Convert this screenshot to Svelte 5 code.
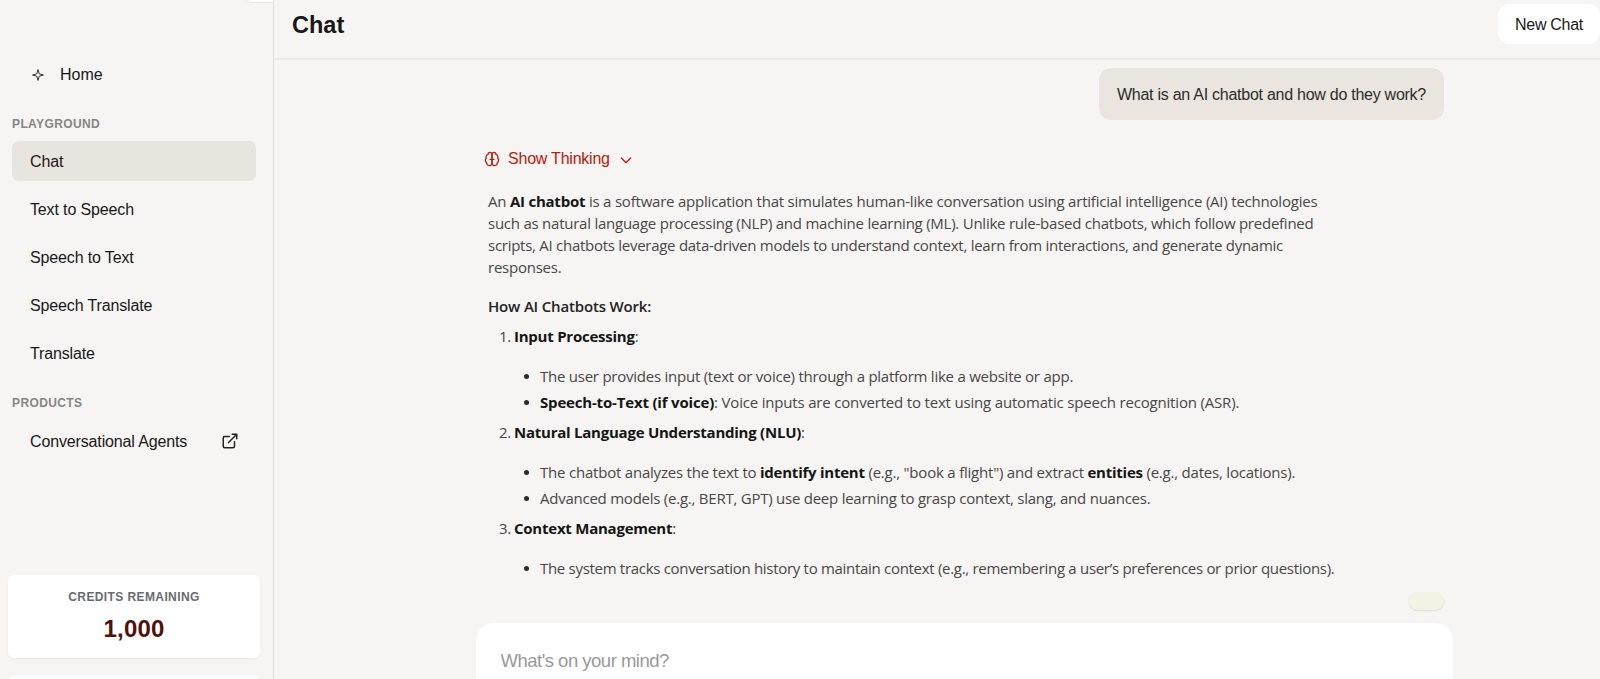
<script>
	let playground = ['Chat', 'Text to Speech', 'Speech to Text', 'Speech Translate', 'Translate'];
	let selected = 'Chat';
	let message = '';
</script>

<div class="page">
	<aside class="sidebar">
		<div class="toggle"></div>
		<div class="home">
			<svg width="12" height="12" viewBox="0 0 12 12" fill="none" stroke="#333" stroke-width="1" stroke-linejoin="round">
				<path d="M6 .6 7.200 4.800 11.400 6 7.200 7.200 6 11.400 4.800 7.200.6 6 4.800 4.800z" />
			</svg>
			<span>Home</span>
		</div>
		<h2>PLAYGROUND</h2>
		<nav>
			{#each playground as item}
				<button class="item" class:active={item === selected} on:click={() => (selected = item)}>
					<span>{item}</span>
				</button>
			{/each}
		</nav>
		<h2 class="products">PRODUCTS</h2>
		<button class="item agents">
			<span class="agents-label">Conversational Agents</span>
			<svg width="18" height="18" viewBox="0 0 24 24" fill="none" stroke="#222" stroke-width="2" stroke-linecap="round" stroke-linejoin="round">
				<path d="M15 3h6v6M10 14 21 3M18 13v6a2 2 0 0 1-2 2H5a2 2 0 0 1-2-2V8a2 2 0 0 1 2-2h6" />
			</svg>
		</button>
		<div class="bottom">
			<div class="credits">
				<div class="credits-label">CREDITS REMAINING</div>
				<div class="credits-value">1,000</div>
			</div>
			<div class="next-card"></div>
		</div>
	</aside>

	<main>
		<header>
			<h1>Chat</h1>
			<button class="new-chat">New Chat</button>
		</header>

		<section class="thread">
			<div class="question"><span>What is an AI chatbot and how do they work?</span></div>
			<div class="thinking">
				<svg width="16" height="16" viewBox="0 0 24 24" fill="none" stroke="currentColor" stroke-width="2" stroke-linecap="round" stroke-linejoin="round">
					<path d="M12 5a3 3 0 1 0-5.997.125 4 4 0 0 0-2.526 5.770 4 4 0 0 0 .556 6.588A4 4 0 1 0 12 18Z" />
					<path d="M12 5a3 3 0 1 1 5.997.125 4 4 0 0 1 2.526 5.770 4 4 0 0 1-.556 6.588A4 4 0 1 1 12 18Z" />
					<path d="M9 12.500h6" />
				</svg>
				<span>Show Thinking</span>
				<svg class="chevron" width="16" height="16" viewBox="0 0 24 24" fill="none" stroke="currentColor" stroke-width="2" stroke-linecap="round" stroke-linejoin="round">
					<path d="m5 9 7 7 7-7" />
				</svg>
			</div>

			<article class="answer">
				<p>
					<span class="lead">An <b>AI chatbot</b> is a software application that simulates human-like conversation using artificial intelligence (AI) technologies</span><br />
					such as natural language processing (NLP) and machine learning (ML). Unlike rule-based chatbots, which follow predefined<br />
					<span class="snug">scripts, AI chatbots leverage data-driven models to understand context, learn from interactions, and generate dynamic</span><br />
					responses.
				</p>
				<h3>How AI Chatbots Work:</h3>
				<div class="step"><span class="num">1.</span><span><b>Input Processing</b>:</span></div>
				<ul>
					<li>The user provides input (text or voice) through a platform like a website or app.</li>
					<li class="loose"><b>Speech-to-Text (if voice)</b>: Voice inputs are converted to text using automatic speech recognition (ASR).</li>
				</ul>
				<div class="step"><span class="num">2.</span><span><b>Natural Language Understanding (NLU)</b>:</span></div>
				<ul>
					<li class="lead">The chatbot analyzes the text to <b>identify intent</b> (e.g., "book a flight") and extract <b>entities</b> (e.g., dates, locations).</li>
					<li>Advanced models (e.g., BERT, GPT) use deep learning to grasp context, slang, and nuances.</li>
				</ul>
				<div class="step"><span class="num">3.</span><span><b>Context Management</b>:</span></div>
				<ul>
					<li class="tight">The system tracks conversation history to maintain context (e.g., remembering a user’s preferences or prior questions).</li>
				</ul>
			</article>
			<div class="pill"></div>
		</section>

		<div class="composer">
			<input type="text" placeholder="What's on your mind?" bind:value={message} />
		</div>
	</main>
</div>

<style>
	:global(body) {
		margin: 0;
		overflow: hidden;
		background: #f6f5f3;
	}
	.page {
		display: flex;
		height: 679px;
		overflow: hidden;
		background: #f6f5f3;
		color: #181818;
		font-family: 'Liberation Sans', Arial, sans-serif;
		font-size: 16px;
	}
	.page * {
		box-sizing: border-box;
	}
	button {
		border: 0;
		background: none;
		font: inherit;
		color: inherit;
		text-align: left;
	}
	.sidebar {
		position: relative;
		display: flex;
		flex-direction: column;
		flex: none;
		width: 274px;
		height: 679px;
		border-right: 1px solid #dfdedc;
	}
	.toggle {
		position: absolute;
		top: -22px;
		right: 0;
		width: 34px;
		height: 24px;
		background: #fff;
		border-radius: 0 0 0 14px;
		box-shadow: 0 1px 1px #e6e5e3;
	}
	.home {
		display: flex;
		align-items: center;
		gap: 16px;
		height: 40px;
		margin-top: 55px;
		padding-left: 32px;
	}
	h2 {
		height: 16px;
		margin: 21px 0 9px 12px;
		font-size: 12px;
		line-height: 16px;
		font-weight: bold;
		letter-spacing: 0.38px;
		color: #858585;
	}
	nav {
		display: flex;
		flex-direction: column;
		gap: 8px;
	}
	.item {
		display: flex;
		align-items: center;
		width: 244px;
		height: 40px;
		margin-left: 12px;
		padding: 2px 17px 0 18px;
		border-radius: 7px;
		letter-spacing: -0.14px;
	}
	.item.active {
		background: #e8e5de;
	}
	h2.products {
		margin: 22px 0 10px 12px;
	}
	.agents {
		justify-content: space-between;
	}
	.agents svg {
		margin-top: -3px;
	}
	.bottom {
		display: flex;
		flex-direction: column;
		gap: 18px;
		height: 104px;
		margin-top: auto;
		padding: 0 13px 0 8px;
	}
	.credits {
		flex: none;
		height: 83px;
		padding-top: 14px;
		background: #fff;
		border-radius: 6px;
		box-shadow: 0 1px 2px #0000000d;
		text-align: center;
	}
	.credits-label {
		font-size: 12px;
		line-height: 16px;
		font-weight: bold;
		letter-spacing: 0.4px;
		color: #666b70;
	}
	.credits-value {
		margin-top: 10px;
		font-size: 24px;
		line-height: 28px;
		font-weight: bold;
		letter-spacing: 0.2px;
		color: #4c130b;
	}
	.next-card {
		flex: none;
		height: 40px;
		background: #fff;
		border-radius: 6px;
	}
	main {
		display: flex;
		flex-direction: column;
		flex: 1;
		min-width: 0;
	}
	header {
		display: flex;
		justify-content: space-between;
		flex: none;
		height: 60px;
		padding-left: 18px;
		border-bottom: 2px solid #ebeae8;
	}
	h1 {
		margin: 11px 0 0;
		font-size: 23.5px;
		line-height: 28px;
	}
	.new-chat {
		width: 102px;
		height: 40px;
		margin-top: 4px;
		padding: 1px 0 0;
		border-radius: 12px;
		background: #fff;
		text-align: center;
		letter-spacing: -0.3px;
	}
	.thread {
		display: flex;
		flex-direction: column;
		flex: none;
		height: 563px;
		padding: 8px 156px 0 210px;
	}
	.question {
		display: flex;
		align-items: center;
		justify-content: center;
		align-self: flex-end;
		flex: none;
		width: 345px;
		height: 52px;
		padding-top: 2px;
		border-radius: 12px;
		background: #eae5de;
		color: #2c2c2c;
		letter-spacing: -0.26px;
		white-space: nowrap;
	}
	.thinking {
		display: flex;
		align-items: center;
		flex: none;
		gap: 8px;
		height: 22px;
		margin-top: 28px;
		letter-spacing: -0.22px;
		color: #b5200d;
	}
	.chevron {
		margin: 2px 0 0;
	}
	.answer {
		margin: 20px 0 0 4px;
		font-family: 'Open Sans', 'Noto Sans', sans-serif;
		font-size: 15px;
		line-height: 22px;
		letter-spacing: -0.24px;
		color: #474747;
		white-space: nowrap;
	}
	.answer b {
		letter-spacing: -0.24px;
		color: #151515;
	}
	.answer p {
		margin: 0;
	}
	.answer h3 {
		margin: 17px 0 8px;
		font-size: inherit;
		font-weight: 600;
		letter-spacing: -0.17px;
		color: #222;
	}
	.lead {
		letter-spacing: -0.21px;
	}
	.snug {
		letter-spacing: -0.27px;
	}
	.step {
		display: flex;
		margin-left: 11px;
	}
	.num {
		width: 15px;
	}
	ul {
		display: flex;
		flex-direction: column;
		gap: 4px;
		margin: 18px 0 8px 52px;
		padding: 0;
		list-style: none;
	}
	li::before {
		content: '';
		float: left;
		width: 5px;
		height: 5px;
		margin: 9px 0 0 -16px;
		border-radius: 50%;
		background: #2b2b2b;
	}
	li.loose,
	li.loose b {
		letter-spacing: -0.18px;
	}
	li.tight {
		letter-spacing: -0.3px;
	}
	.pill {
		align-self: flex-end;
		flex: none;
		width: 35px;
		height: 18px;
		margin-top: 5px;
		border-radius: 9px;
		background: #f4f2e4;
		box-shadow: 0 1px 2px #0000001a;
	}
	.composer {
		flex: none;
		width: 977px;
		height: 100px;
		margin-left: 201.5px;
		padding: 26px 25px;
		border-radius: 18px;
		background: #fff;
	}
	input {
		width: 100%;
		height: 24px;
		padding: 0;
		border: 0;
		outline: none;
		background: none;
		font: 18.5px 'Liberation Sans', Arial, sans-serif;
		letter-spacing: -0.5px;
	}
	input::placeholder {
		color: #999;
		opacity: 1;
	}
</style>
